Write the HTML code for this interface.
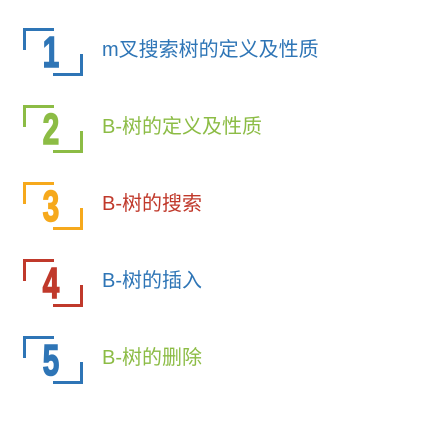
<!DOCTYPE html>
<html><head><meta charset="utf-8"><style>
body{margin:0;width:425px;height:425px;background:#fff;position:relative;overflow:hidden;font-family:"Liberation Sans","Noto Sans CJK SC",sans-serif}
.r{position:absolute;left:0;width:425px;height:60px}
.tl{position:absolute;left:23px;top:0;width:28px;height:19px;border-top:3px solid;border-left:3px solid}
.br{position:absolute;left:53px;top:26px;width:27px;height:19px;border-bottom:3px solid;border-right:3px solid}
.n{position:absolute;left:37px;top:1px;width:28px;text-align:center;font-size:44px;font-weight:bold;line-height:48px;transform:scaleX(0.68);transform-origin:center;-webkit-text-stroke:1.5px currentColor}
.t{position:absolute;left:102px;top:10px;font-size:20px;line-height:24px;white-space:nowrap}
</style></head><body>
<div class="r" style="top:28px"><div class="tl" style="border-color:#2e75b6"></div><div class="br" style="border-color:#2e75b6"></div><div class="n" style="color:#2e75b6">1</div><div class="t" style="color:#2e75b6">m叉搜索树的定义及性质</div></div>
<div class="r" style="top:105px"><div class="tl" style="border-color:#8cbc45"></div><div class="br" style="border-color:#8cbc45"></div><div class="n" style="color:#8cbc45">2</div><div class="t" style="color:#8cbc45">B-树的定义及性质</div></div>
<div class="r" style="top:182px"><div class="tl" style="border-color:#f6a91c"></div><div class="br" style="border-color:#f6a91c"></div><div class="n" style="color:#f6a91c">3</div><div class="t" style="color:#c0392b">B-树的搜索</div></div>
<div class="r" style="top:259px"><div class="tl" style="border-color:#c0392b"></div><div class="br" style="border-color:#c0392b"></div><div class="n" style="color:#c0392b">4</div><div class="t" style="color:#2e75b6">B-树的插入</div></div>
<div class="r" style="top:336px"><div class="tl" style="border-color:#2e75b6"></div><div class="br" style="border-color:#2e75b6"></div><div class="n" style="color:#2e75b6">5</div><div class="t" style="color:#8cbc45">B-树的删除</div></div>
</body></html>
